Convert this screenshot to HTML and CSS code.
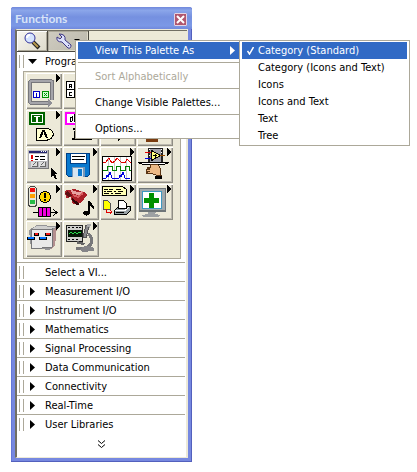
FILE: index.html
```html
<!DOCTYPE html>
<html lang="en">
<head>
<meta charset="utf-8">
<title>Functions</title>
<link rel="stylesheet" href="styles.css">
</head>
<body>
<main class="palette">
  <header class="titlebar">
    <h1>Functions</h1>
    <button class="close" aria-label="Close"><svg width="9" height="9" viewBox="0 0 9 9"><path d="M1 1l7 7M8 1l-7 7" stroke="#fff" stroke-width="2"/></svg></button>
  </header>
  <div class="client">
    <div class="toolbar">
      <button class="tool" aria-label="Search">
        <svg width="20" height="18" viewBox="0 0 20 18"><path d="M11 10l6 6" stroke="#222" stroke-width="4"/><path d="M11 10l5 5" stroke="#b89a50" stroke-width="2"/><circle cx="8" cy="6" r="5" fill="#d5e4ff" stroke="#34349a"/><path d="M5 6q0-3 3-3" fill="none" stroke="#fff" stroke-width="2"/></svg>
      </button>
      <div class="tool-wrap">
        <button class="tool options" aria-label="View options" aria-expanded="true">
          <svg width="26" height="18" viewBox="0 0 26 18"><path d="M4 2l3 3-2 2-3-2q-1 5 5 5l6 6q3 1 3-3l-6-5q1-6-6-6z" fill="#dde1fb" stroke="#3b3483"/><path d="M13 13h1v1h-1z" fill="#3b3483"/><path d="M19 7h6l-3 3z"/></svg>
        </button>
        <ul class="menu main-menu">
          <li>
            <button class="item selected">View This Palette As<svg class="more" width="5" height="9" viewBox="0 0 5 9"><path d="M0 0l5 4.500-5 4.500z" fill="#fff"/></svg></button>
            <ul class="menu sub-menu">
              <li><button class="item selected"><svg class="check" width="7" height="8" viewBox="0 0 7 8"><path d="M0.500 4l2 3 4-7" fill="none" stroke="#fff" stroke-width="1.500"/></svg>Category (Standard)</button></li>
              <li><button class="item">Category (Icons and Text)</button></li>
              <li><button class="item">Icons</button></li>
              <li><button class="item">Icons and Text</button></li>
              <li><button class="item">Text</button></li>
              <li><button class="item">Tree</button></li>
            </ul>
          </li>
          <li class="rule"></li>
          <li><button class="item" disabled>Sort Alphabetically</button></li>
          <li class="rule"></li>
          <li><button class="item">Change Visible Palettes...</button></li>
          <li class="rule"></li>
          <li><button class="item">Options...</button></li>
        </ul>
      </div>
    </div>

    <section>
      <button class="category open"><svg class="arrow" width="9" height="9" viewBox="0 0 9 9"><path d="M0 2h9L4.500 7z"/></svg>Programming</button>
      <div class="functions">
        <button class="fn" aria-label="Structures"><svg viewBox="0 0 36 36">
          <path d="M26 27V9q0-1-2-1H6q-2 0-2 2v18q0 2 2 2h17" fill="none" stroke="#77777b" stroke-width="4"/><path d="M26 27V9q0-1-2-1H6q-2 0-2 2v18q0 2 2 2h17" fill="none" stroke="#a5a5aa" stroke-width="2"/><path d="M22 26v8l5-4z" fill="#909096"/>
          <path d="M7.500 18.500h6v6h-6z" fill="#fff" stroke="#0000c8"/><path d="M10 20h1v4h-1z" fill="#0000c8"/><path d="M16.500 18.500h6v6h-6z" fill="#d5ffd5" stroke="#009000"/><path d="M18 20l3 3M21 20l-3 3" stroke="#009000"/><path d="M30 1v8l4-4z"/></svg></button>
        <button class="fn" aria-label="Array"><svg viewBox="0 0 36 36"><g fill="#fff" stroke="#000"><path d="M3.500 8.500h8v8h-8zM11.500 8.500h8v8h-8zM3.500 16.500h8v8h-8zM11.500 16.500h8v8h-8z"/></g><path d="M6.500 15v-4h2v2h-2M8 13l1 2M9 19.500H6.500v3H9" fill="none" stroke="#000"/></svg></button>
        <button class="fn" aria-label="Cluster"><svg viewBox="0 0 36 36"><path d="M5 8h24v20H5z" fill="#fff" stroke="#964b00"/></svg></button>
        <button class="fn" aria-label="Numeric"><svg viewBox="0 0 36 36"><path d="M5 6l24 11L5 28z" fill="#ffffc8" stroke="#000"/></svg></button>

        <button class="fn" aria-label="Boolean"><svg viewBox="0 0 36 36"><path d="M3 2h16v13H3z" fill="#006400"/><path d="M5.500 4.500h11v8h-11z" fill="none" stroke="#fff"/><path d="M8 6h6v1H8zM10 7h2v5h-2z" fill="#fff"/><path d="M10.500 18.500h11q5 1 6 5.500-1 5-6 6h-11z" fill="#ffffd0" stroke="#000"/><path d="M14 28l3-7h1l3 7" fill="none" stroke="#000" stroke-width="2"/><path d="M30 1v8l4-4z"/></svg></button>
        <button class="fn" aria-label="String"><svg viewBox="0 0 36 36"><path d="M3 3h22v11H3z" fill="#fff" stroke="#f0f" stroke-width="2"/><path d="M9 7H7v4h2M9 6v5M11 4v7h2V7h-2" fill="none" stroke="#000"/><path d="M10 19h5M12.500 19v9M9 29h20M12 21v7" stroke="#000" stroke-width="2"/></svg></button>
        <button class="fn" aria-label="Comparison"><svg viewBox="0 0 36 36"><path d="M18.500 17.500l7 6-7 7z" fill="#ffffd0" stroke="#000"/></svg></button>
        <button class="fn" aria-label="Timing"><svg viewBox="0 0 36 36"><path d="M9 12h12v20H9z" fill="#7a3c10"/><path d="M9 28h12v1H9z" fill="#222"/></svg></button>

        <button class="fn" aria-label="Dialog"><svg viewBox="0 0 36 36"><path d="M2 3h21v19H2z" fill="#777"/><path d="M2 3h20v18H2z" fill="#b8b8bc"/><path d="M3 4h18v2H3z" fill="#282870"/><path d="M15 4h1v1h-1zM17 4h1v1h-1zM19 4h1v1h-1z" fill="#fff"/><path d="M3 7h18v7H3z" fill="#fff"/><path d="M5 8h2v4H5zM5 13h2v1H5z" fill="#e00000"/><path d="M9 9h4v1H9zM14 9h5v1h-5zM9 12h3v1H9zM14 12h5v1h-5z"/><path d="M5 15h6v5H5zM13 15h6v5h-6z" fill="#ddd"/><path d="M6 19h5v-4M14 19h5v-4M7 18l3-3M15 18l3-3" fill="none" stroke="#666"/><path d="M25 21l6 6h-2l2 5h-2l-2-4-2 2z"/><path d="M30 1v8l4-4z"/></svg></button>
        <button class="fn" aria-label="File I/O"><svg viewBox="0 0 36 36"><path d="M3.500 6.500h23v21l-2 2h-19l-2-2z" fill="#0879cf" stroke="#003f86"/><path d="M7 7h17v10H7z" fill="#003f86"/><path d="M8 7h15v9H8z" fill="#fff"/><path d="M9 10l2-1 1 1 2-1 1 1 2-1 1 1 2-1 2 1M9 13l2-1 1 1 2-1 1 1 2-1 1 1 3-1" fill="none" stroke="#000"/><path d="M9 20h13v10H9z" fill="#7898b8"/><path d="M10 21h10v9H10z" fill="#d7e6f1"/><path d="M15 22h4v7h-4z" fill="#0879cf"/><path d="M30 1v8l4-4z"/></svg></button>
        <button class="fn" aria-label="Waveform"><svg viewBox="0 0 36 36"><path d="M2.500 9.500h29v24h-29z" fill="#fff" stroke="#000"/><path d="M8.500 10v23M14.500 10v23M20.500 10v23M26.500 10v23" stroke="#c8c8c8"/><path d="M3 16l3-1 3-4 3 5 3-2 2-3 4 4 4 1 2-4 4 4" fill="none" stroke="#e00000"/><path d="M3 23.500h4v-4h5v4h4v-4h4v4h5v-4h4v4h2" fill="none" stroke="#008000"/><path d="M3 31h3l1-3 1 2 2-5 2 6h7l1-3 1 2 2-5 2 6h5" fill="none" stroke="#0000e0"/><path d="M30 1v8l4-4z"/></svg></button>
        <button class="fn" aria-label="Application Control"><svg viewBox="0 0 36 36"><path d="M11 1h15v14H11z" fill="#222"/><path d="M13 2h11v13H13z" fill="#a0a0a8"/><path d="M12 2h1v1h-1zM12 5h1v1h-1zM12 8h1v1h-1zM24 2h1v1h-1zM24 5h1v1h-1zM24 8h1v1h-1z" fill="#fff"/><path d="M14.500 3.500l9 5-9 5z" fill="#ffff80" stroke="#000"/><path d="M16 8.500h4M18 6.500v4" stroke="#000"/><path d="M8 5h6v1H8z" fill="#e00000"/><path d="M8 11h6v1H8z" fill="#0000e0"/><path d="M23 8h5v1h-5z" fill="#964b00"/><path d="M1 15.500h31l-5 2H6z" fill="#fff" stroke="#000"/><path d="M13 18l7-1q4 3 4 11h-5q-3 0-4-2l-5 1-1-1 4-2-4 1v-2l4-1-3-1 4-1z" fill="#edb985" stroke="#5a3515"/><path d="M14 20h6v5h-5z" fill="#edb985"/><path d="M18 29h7v3h-7z"/><path d="M30 1v8l4-4z"/></svg></button>

        <button class="fn" aria-label="Synchronization"><svg viewBox="0 0 36 36"><rect x="2.500" y="2.500" width="8" height="20" rx="3" fill="#e7e7da" stroke="#444"/><circle cx="6.500" cy="6" r="2.500" fill="#ee1010"/><circle cx="6.500" cy="12" r="2.500" fill="#ffa000"/><circle cx="6.500" cy="18" r="2.500" fill="#28ba48"/><circle cx="19" cy="13" r="5.500" fill="#ffd900" stroke="#000"/><path d="M18 9h2v5h-2zM18 15h2v2h-2z"/><path d="M7 28.500h24M27 25l4 3.500-4 3.500" fill="none" stroke="#000"/><path d="M12.500 23.500h12v9h-12z" fill="#f000e0" stroke="#000"/><path d="M16.500 23v10M20.500 23v10" stroke="#000"/><path d="M30 1v8l4-4z"/></svg></button>
        <button class="fn" aria-label="Graphics and Sound"><svg viewBox="0 0 36 36"><path d="M2 8q0-3 4-2l5-1 11 3 2 3-5 7-5 3-5-2-1-6-5 1z" fill="#a92028"/><path d="M8 6l7 2 6-1-5 4-7-1z" fill="#e7a0a0"/><path d="M10 11l5 2 5-4" stroke="#d85c60" stroke-width="2" fill="none"/><path d="M9 17l5 4 3-1-8-6z" fill="#350408"/><path d="M2 9l3-2 4 5-4 1z" fill="#5d1014"/><ellipse cx="23.500" cy="29" rx="3.500" ry="2.500"/><path d="M25 17h2l4 6v3l-4-4v7h-2z"/><path d="M30 1v8l4-4z"/></svg></button>
        <button class="fn" aria-label="Report Generation"><svg viewBox="0 0 36 36"><path d="M2.500 2.500h20l4 3v6h-24z" fill="#ffffb4" stroke="#000"/><path d="M4 5h4M9 5h4M16 5h5M4 7.500h2M7 7.500h5M14 7.500h2M18 7.500h5M4 9.500h5M11 9.500h2M15 9.500h6" stroke="#000"/><path d="M3.500 16.500h4l3 3v6h-7z" fill="#ff0" stroke="#555"/><path d="M6 25v3h6M10 26l2 2-2 2" fill="none" stroke="#e00000"/><path d="M14.500 26.500l4-4h12v4l-4 4h-12z" fill="#98a0a4" stroke="#000"/><path d="M18.500 24.500v-8h5l3 3v5z" fill="#fff" stroke="#000"/><path d="M15 26.500h10l4-3" fill="none" stroke="#fff"/><path d="M16 28.500h8" stroke="#000"/><path d="M30 1v8l4-4z"/></svg></button>
        <button class="fn" aria-label="VI Analyzer"><svg viewBox="0 0 36 36"><path d="M2 4h27v24H2z" fill="#6e7578"/><path d="M3 5h25v21H3z" fill="#a0a8ac"/><path d="M5 7h20v18H5z" fill="#3d98c0"/><path d="M6 8h18v16H6z" fill="#fff"/><path d="M12 9h5v5h5v5h-5v5h-5v-5H7v-5h5z" fill="#009000"/><path d="M11 28h8l-1 2 6 1-3 2H6l-2-2 7-1z" fill="#9da1a3"/><path d="M30 1v8l4-4z"/></svg></button>

        <button class="fn" aria-label="Robotics"><svg viewBox="0 0 36 36"><path d="M3 9l8-5 20 1-2 20-6 4-18-2z" fill="#949497"/><path d="M27 9l4-4-2 20-4 3z" fill="#b38f8f"/><path d="M6 8l5-3 19 1-4 2z" fill="#cfcfce"/><path d="M5 9l21-1v18l-20 2z" fill="#e9e9e9" stroke="#77777a"/><path d="M8 12h5v3H8zM19 12h6v3h-6z"/><path d="M9 12h3v2H9zM20 12h4v2h-4z" fill="#f01818"/><path d="M1 16h8v3H1zM13 16h8v3h-8z"/><path d="M2 16h6v2H2zM14 16h6v2h-6z" fill="#0070ff"/><path d="M30 1v8l4-4z"/></svg></button>
        <button class="fn" aria-label="Measurement"><svg viewBox="0 0 36 36"><path d="M3 4h17v17H3z" fill="#222"/><path d="M4 5h15v15H4z" fill="#d0d0cc"/><path d="M5 6h2v1H5zM9 6h2v1H9zM13 6h2v1h-2zM16 6h2v1h-2zM5 18h2v1H5zM9 18h2v1H9zM13 18h2v1h-2z"/><path d="M5 9h14v7H5z" fill="#061806"/><path d="M6 13l2-2 2 2 2-2 2 2 2-2 2 1" fill="none" stroke="#27e04b"/><path d="M23 4l3 1-3 12-3-1z" fill="#88888b" stroke="#555"/><path d="M24 3h4l-1 4-3-1z" fill="#aaa"/><path d="M25 13q6 4 3 10-2 3-6 4h-9" fill="none" stroke="#77777a" stroke-width="3"/><path d="M14 20l8 2-1 2-7-1z" fill="#666"/><path d="M17 28q3-3 8-3l6 2v3l-12 1z" fill="#858588"/><path d="M30 1v8l4-4z"/></svg></button>
      </div>
    </section>

    <nav class="categories">
      <button class="category"><span class="arrow"></span>Select a VI...</button>
      <button class="category"><svg class="arrow" width="9" height="9" viewBox="0 0 9 9"><path d="M2 0v9l5-4.500z"/></svg>Measurement I/O</button>
      <button class="category"><svg class="arrow" width="9" height="9" viewBox="0 0 9 9"><path d="M2 0v9l5-4.500z"/></svg>Instrument I/O</button>
      <button class="category"><svg class="arrow" width="9" height="9" viewBox="0 0 9 9"><path d="M2 0v9l5-4.500z"/></svg>Mathematics</button>
      <button class="category"><svg class="arrow" width="9" height="9" viewBox="0 0 9 9"><path d="M2 0v9l5-4.500z"/></svg>Signal Processing</button>
      <button class="category"><svg class="arrow" width="9" height="9" viewBox="0 0 9 9"><path d="M2 0v9l5-4.500z"/></svg>Data Communication</button>
      <button class="category"><svg class="arrow" width="9" height="9" viewBox="0 0 9 9"><path d="M2 0v9l5-4.500z"/></svg>Connectivity</button>
      <button class="category"><svg class="arrow" width="9" height="9" viewBox="0 0 9 9"><path d="M2 0v9l5-4.500z"/></svg>Real-Time</button>
      <button class="category"><svg class="arrow" width="9" height="9" viewBox="0 0 9 9"><path d="M2 0v9l5-4.500z"/></svg>User Libraries</button>
    </nav>
    <button class="expand" aria-label="Show more"><svg width="7" height="8" viewBox="0 0 7 8"><path d="M0 .5l3.500 3L7 .5M0 4.500l3.500 3 3.500-3" fill="none" stroke="#000"/></svg></button>
  </div>
</main>
</body>
</html>
```
FILE: styles.css
```css
* {
  box-sizing: border-box;
}

body {
  margin: 0;
  padding: 7px 11px;
  background: #fff;
  color: #000;
  font: 11px/17px "DejaVu Sans Condensed", Tahoma, sans-serif;
}

button {
  margin: 0;
  padding: 0;
  border: 0;
  background: none;
  color: inherit;
  font: inherit;
  text-align: left;
}

svg {
  display: block;
}

.palette {
  width: fit-content;
  padding: 0 4px 4px;
  border-radius: 3px 3px 0 0;
  background: #7688e0;
  box-shadow: inset -1px -1px #5360bd, inset 1px 0 #6478d8;
}

.titlebar {
  display: flex;
  align-items: center;
  justify-content: space-between;
  height: 22px;
  margin: 0 -4px;
  padding: 2px 5px 0 4px;
  border-radius: 3px 3px 0 0;
  background: linear-gradient(#7088dc, #8ba6ea 15%, #7590e0 45%, #7b98e6 85%, #7088dc);
}

.titlebar h1 {
  margin: 0;
  color: #d8e4f8;
  font: bold 12px/16px Lato, "Trebuchet MS", sans-serif;
}

.close {
  display: grid;
  place-items: center;
  width: 13px;
  height: 13px;
  border: 1px solid #e4d4e4;
  border-radius: 1px;
  background: #b0566e;
}

.client {
  padding-right: 2px;
  border: 1px solid #ece9d8;
  border-left: 2px solid #716f64;
  background: linear-gradient(#ece9d8, #ece9d8) right / 1px 100% no-repeat #fff;
}

.toolbar {
  display: flex;
  height: 22px;
  margin-right: -2px;
  border-top: 1px solid #716f64;
  background: #ece9d8;
}

.tool {
  display: grid;
  place-items: center;
  width: 31px;
  height: 21px;
  border: solid #4a483f;
  border-width: 0 1px 1px 0;
  background: linear-gradient(135deg, #f8f7f1, #dedbcb);
  box-shadow: inset 1px 1px #fff, inset -1px -1px #aca899;
}

.tool-wrap {
  position: relative;
}

.options {
  width: 41px;
  background: linear-gradient(135deg, #cfccc0, #bbb8ac);
  box-shadow: inset 1px 1px #aca899, inset -1px -1px #dedbcb;
}

.menu {
  position: absolute;
  z-index: 1;
  margin: 0;
  padding: 1px 2px;
  border: 1px solid #aca899;
  background: #fff;
  list-style: none;
  white-space: nowrap;
}

.main-menu {
  top: 9px;
  left: 27px;
  width: 167px;
}

.main-menu > li {
  position: relative;
}

.sub-menu {
  top: -2px;
  left: 100%;
  width: 171px;
}

.item {
  display: flex;
  align-items: center;
  width: 100%;
  height: 17px;
  padding: 0 4px 0 17px;
}

.sub-menu .item {
  padding-left: 16px;
}

.item:disabled {
  color: #aca899;
}

.selected {
  background: #316ac5;
  color: #fff;
}

.more {
  margin-left: auto;
}

.check {
  margin: 0 4px 0 -11px;
}

.rule {
  height: 1px;
  margin: 3px 0 5px;
  background: #aca899;
}

.category {
  display: flex;
  align-items: center;
  gap: 6px;
  width: 100%;
  height: 19px;
  padding-left: 2px;
  border-top: 1px solid #aca899;
}

.category::before {
  width: 3px;
  height: 13px;
  border: solid #aca899;
  border-width: 0 1px;
  content: "";
}

.category .arrow {
  flex: none;
  width: 9px;
  margin: 0 2px 0 -2px;
}

.open {
  border-top: 0;
}

.functions {
  display: grid;
  grid-template-columns: repeat(4, 36px);
  gap: 1px;
  width: fit-content;
  margin: 0 4px 3px 6px;
  padding: 1px 7px 1px 2px;
  border: 1px solid #aca899;
  background: #ece9d8;
}

.fn {
  width: 36px;
  height: 36px;
  overflow: hidden;
  box-shadow: inset 1px 1px #fff, inset -1px -1px #8f8d84, inset -2px -2px #bdbab0;
}

.fn svg {
  width: 36px;
  height: 36px;
  shape-rendering: crispEdges;
}

.expand {
  display: grid;
  place-items: center;
  width: 100%;
  height: 24px;
  padding-bottom: 3px;
}
```
